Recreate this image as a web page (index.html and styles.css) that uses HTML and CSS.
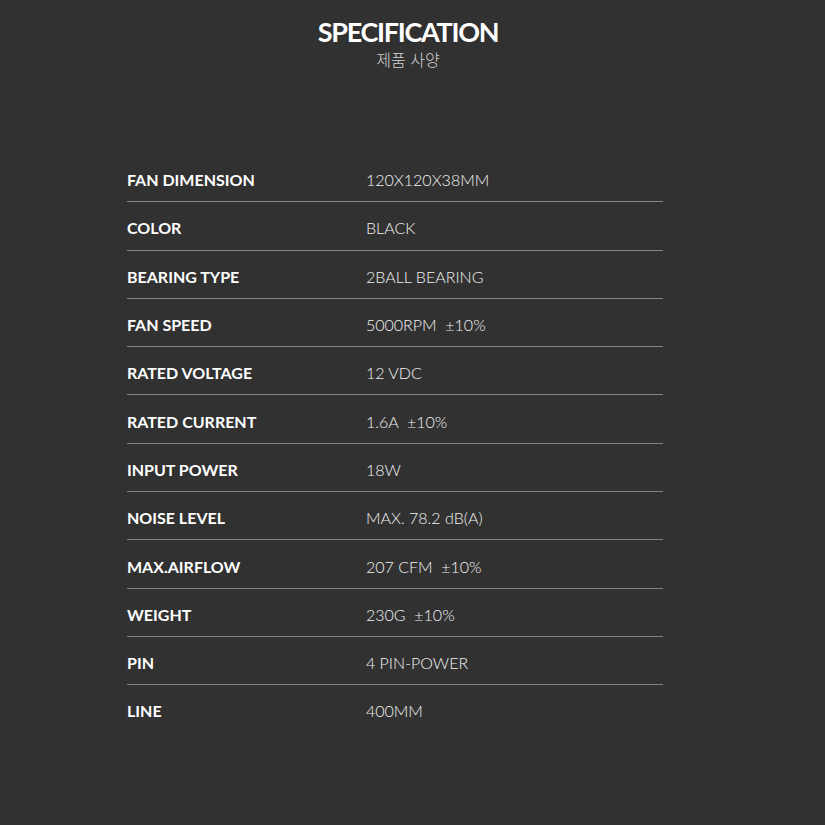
FILE: index.html
```html
<!DOCTYPE html>
<html lang="ko">
<head>
<meta charset="utf-8">
<link rel="stylesheet" href="styles.css">
</head>
<body>
<div class="page">
  <header class="head">
    <h1 class="title">SPECIFICATION</h1>
    <p class="sub">제품 사양</p>
  </header>
  <div class="spec">
    <div class="row"><span class="k">FAN DIMENSION</span><span class="v">120X120X38MM</span></div>
    <div class="row"><span class="k">COLOR</span><span class="v">BLACK</span></div>
    <div class="row"><span class="k">BEARING TYPE</span><span class="v">2BALL BEARING</span></div>
    <div class="row"><span class="k">FAN SPEED</span><span class="v">5000RPM &nbsp;±10%</span></div>
    <div class="row"><span class="k">RATED VOLTAGE</span><span class="v">12 VDC</span></div>
    <div class="row"><span class="k">RATED CURRENT</span><span class="v">1.6A &nbsp;±10%</span></div>
    <div class="row"><span class="k">INPUT POWER</span><span class="v">18W</span></div>
    <div class="row"><span class="k">NOISE LEVEL</span><span class="v">MAX. 78.2 dB(A)</span></div>
    <div class="row"><span class="k">MAX.AIRFLOW</span><span class="v">207 CFM &nbsp;±10%</span></div>
    <div class="row"><span class="k">WEIGHT</span><span class="v">230G &nbsp;±10%</span></div>
    <div class="row"><span class="k">PIN</span><span class="v">4 PIN-POWER</span></div>
    <div class="row last"><span class="k">LINE</span><span class="v">400MM</span></div>
  </div>
</div>
</body>
</html>
```

FILE: styles.css
```css
html, body {
  margin: 0;
  padding: 0;
  background: #313131;
}
.page {
  width: 825px;
  height: 825px;
  background: #313131;
  font-family: "Lato", "Noto Sans CJK KR", sans-serif;
  color: #fff;
}
.head {
  display: flex;
  flex-direction: column;
  align-items: center;
  padding-top: 16px;
  padding-right: 9px;
}
.title {
  margin: 0;
  font-size: 27px;
  line-height: 32px;
  font-weight: 700;
  letter-spacing: -1.3px;
  color: #fff;
}
.sub {
  margin: 2px 0 0;
  font-family: "Noto Sans CJK KR", sans-serif;
  font-size: 16px;
  line-height: 19px;
  font-weight: 300;
  color: #d0d0d0;
}
.spec {
  width: 536px;
  margin: 85px 0 0 127px;
}
.row {
  display: flex;
  align-items: center;
  height: 47.3px;
  border-bottom: 1px solid #858585;
}
.row.last {
  border-bottom: none;
}
.k {
  width: 239px;
  font-size: 16px;
  font-weight: 700;
  color: #fff;
  padding-top: 4px;
}
.v {
  font-size: 16px;
  font-weight: 300;
  color: #f2f2f2;
  padding-top: 4px;
}
```
